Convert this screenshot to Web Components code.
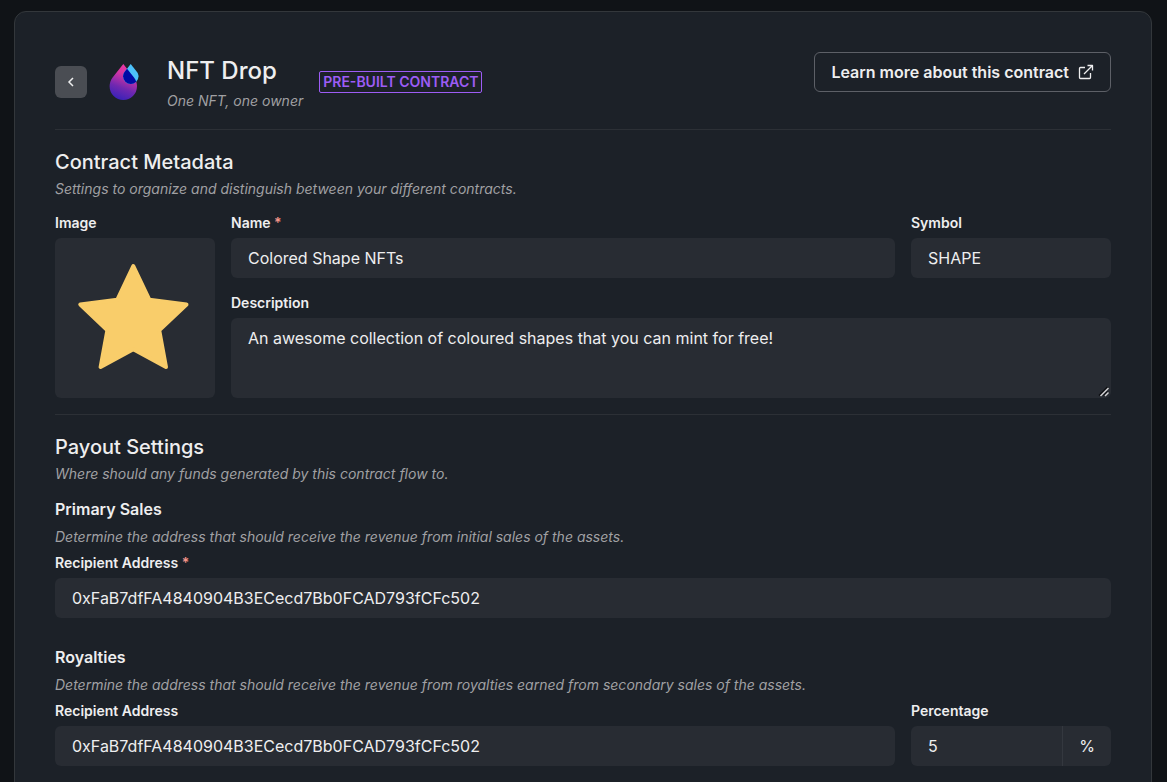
<!DOCTYPE html>
<html lang="en">
<head>
<meta charset="utf-8">
<title>NFT Drop</title>
<style>
  :root {
    --page: #101317;
    --card: #1c2128;
    --field: #282c33;
    --line: #2c3036;
    --edge: #33373b;
    --text: #eeeeef;
    --muted: #a0a0a3;
    --accent: #9d5cf5;
    --required: #f5958a;
  }
  body {
    margin: 0;
    padding: 11px 15px 15px 14px;
    background: var(--page);
    color: var(--text);
    font: 16px/24px Inter, "Liberation Sans", sans-serif;
  }
</style>
</head>
<body>
<contract-card>
  <contract-header heading="NFT Drop" tagline="One NFT, one owner" badge="PRE-BUILT CONTRACT"></contract-header>
  <form-section heading="Contract Metadata" note="Settings to organize and distinguish between your different contracts.">
    <metadata-grid>
      <image-field slot="image" label="Image"></image-field>
      <text-field slot="name" label="Name" value="Colored Shape NFTs" required></text-field>
      <text-field slot="symbol" label="Symbol" value="SHAPE"></text-field>
      <text-field slot="description" label="Description" value="An awesome collection of coloured shapes that you can mint for free!" multiline></text-field>
    </metadata-grid>
  </form-section>
  <form-section heading="Payout Settings" note="Where should any funds generated by this contract flow to.">
    <payout-group heading="Primary Sales" note="Determine the address that should receive the revenue from initial sales of the assets.">
      <text-field label="Recipient Address" value="0xFaB7dfFA4840904B3ECecd7Bb0FCAD793fCFc502" required></text-field>
    </payout-group>
    <payout-group heading="Royalties" note="Determine the address that should receive the revenue from royalties earned from secondary sales of the assets.">
      <text-field label="Recipient Address" value="0xFaB7dfFA4840904B3ECecd7Bb0FCAD793fCFc502"></text-field>
      <text-field slot="side" label="Percentage" value="5" suffix="%"></text-field>
    </payout-group>
  </form-section>
</contract-card>

<script>
  class Base extends HTMLElement {
    connectedCallback() {
      if (this.shadowRoot) return;
      this.attachShadow({ mode: "open" }).innerHTML =
        `<style>*{box-sizing:border-box}h1,h2,h3,p{margin:0}${this.css()}</style>${this.html()}`;
    }
    attr(name) { return this.getAttribute(name) || ""; }
  }

  customElements.define("contract-card", class extends Base {
    css() { return `
      :host { display: block; }
      main { background: var(--card); border: 1px solid var(--edge); border-radius: 12px; padding: 40px; }`; }
    html() { return `<main><slot></slot></main>`; }
  });

  customElements.define("contract-header", class extends Base {
    css() { return `
      :host { display: block; }
      header { display: flex; justify-content: space-between; align-items: flex-start; gap: 16px; padding-bottom: 17px; }
      .lead { display: flex; align-items: center; gap: 16px; }
      .back { width: 32px; height: 32px; padding: 0; border: 0; border-radius: 6px; background: #4a4d53; color: var(--text); display: grid; place-items: center; }
      .drop { width: 48px; height: 48px; }
      h1 { font-size: 24px; line-height: 38px; font-weight: 500; }
      p { font-size: 14px; line-height: 22px; font-style: italic; color: var(--muted); }
      .badge { border: 1px solid var(--accent); border-radius: 2px; padding: 0 3px; font-size: 14px; line-height: 20px; font-weight: 600; color: var(--accent); }
      .more { display: flex; align-items: center; gap: 9px; height: 40px; padding: 0 16px; border: 1px solid #5d6067; border-radius: 6px; color: inherit; font-weight: 600; text-decoration: none; }`; }
    html() { return `
      <header>
        <div class="lead">
          <button class="back" type="button" aria-label="Back">
            <svg width="16" height="16" viewBox="0 0 16 16" fill="none" stroke="currentColor" stroke-width="1.5"><path d="M10 4 6 8l4 4"/></svg>
          </button>
          <svg class="drop" viewBox="0 0 48 48" aria-hidden="true">
            <defs>
              <linearGradient id="body" x1="0.7" y1="0" x2="0.4" y2="1">
                <stop offset="0" stop-color="#f237a3"/><stop offset=".3" stop-color="#d535a4"/><stop offset=".68" stop-color="#7028b0"/><stop offset="1" stop-color="#3a22b8"/>
              </linearGradient>
              <clipPath id="big"><path d="M20.3 6 31 19.5C33 22.2 34 25 34 28.3a13.7 13.7 0 0 1-27.4 0C6.6 25 7.6 22.2 9.6 19.5Z"/></clipPath>
            </defs>
            <path fill="url(#body)" d="M20.3 6 31 19.5C33 22.2 34 25 34 28.3a13.7 13.7 0 0 1-27.4 0C6.6 25 7.6 22.2 9.6 19.5Z"/>
            <path fill="#4cc1fb" d="M27.7 6 34 14C35 15.3 35.5 17 35.5 18.3a7.7 7.7 0 0 1-15.4 0C20.1 17 20.5 15.3 21.5 14Z"/>
            <path fill="#000aa5" clip-path="url(#big)" d="M27.7 6 34 14C35 15.3 35.5 17 35.5 18.3a7.7 7.7 0 0 1-15.4 0C20.1 17 20.5 15.3 21.5 14Z"/>
          </svg>
          <div><h1>${this.attr("heading")}</h1><p>${this.attr("tagline")}</p></div>
          <span class="badge">${this.attr("badge")}</span>
        </div>
        <a class="more" href="#">Learn more about this contract
          <svg width="16" height="16" viewBox="0 0 16 16" fill="none" stroke="currentColor" stroke-width="1.3" stroke-linejoin="round" aria-hidden="true"><path d="M7 3.5H2.5A1 1 0 0 0 1.500 4.5V13.5A1 1 0 0 0 2.500 14.500H11.500A1 1 0 0 0 12.500 13.500V9M9.500 1.500h5v5M14.500 1.500 6 10"/></svg>
        </a>
      </header>`; }
  });

  customElements.define("form-section", class extends Base {
    css() { return `
      :host { display: block; }
      section { border-top: 1px solid var(--line); padding: 16px 0; }
      h2 { font-size: 20px; line-height: 32px; font-weight: 500; font-optical-sizing: none; }
      p { font-size: 14px; line-height: 22px; font-style: italic; color: var(--muted); }
      .content { display: grid; gap: 27px; padding-top: 12px; }`; }
    html() { return `<section><h2>${this.attr("heading")}</h2><p>${this.attr("note")}</p><div class="content"><slot></slot></div></section>`; }
  });

  customElements.define("metadata-grid", class extends Base {
    css() { return `
      :host { display: grid; grid-template-columns: 160px 1fr 200px; gap: 14px 16px; grid-template-areas: "image name symbol" "image desc desc"; }
      slot[name=image]::slotted(*) { grid-area: image; }
      slot[name=name]::slotted(*) { grid-area: name; }
      slot[name=symbol]::slotted(*) { grid-area: symbol; }
      slot[name=description]::slotted(*) { grid-area: desc; }`; }
    html() { return `<slot name="image"></slot><slot name="name"></slot><slot name="symbol"></slot><slot name="description"></slot>`; }
  });

  customElements.define("payout-group", class extends Base {
    css() { return `
      :host { display: grid; gap: 4px; }
      h3 { font-size: 16px; line-height: 25px; font-weight: 600; }
      p { font-size: 14px; line-height: 22px; font-style: italic; color: var(--muted); }
      .row { display: flex; gap: 16px; }
      slot:not([name])::slotted(*) { flex: 1; }
      slot[name=side]::slotted(*) { flex: 0 0 200px; }`; }
    html() { return `<h3>${this.attr("heading")}</h3><p>${this.attr("note")}</p><div class="row"><slot></slot><slot name="side"></slot></div>`; }
  });

  customElements.define("image-field", class extends Base {
    css() { return `
      :host { display: block; }
      .label { display: block; margin-bottom: 4px; font-size: 14px; line-height: 22px; font-weight: 600; }
      button { display: block; width: 160px; height: 160px; padding: 0; border: 0; border-radius: 6px; background: var(--field); }
      svg { display: block; }`; }
    html() { return `
      <label class="label" for="pick">${this.attr("label")}</label>
      <button id="pick" type="button">
        <svg width="160" height="160" viewBox="0 0 160 160" aria-hidden="true">
          <path fill="#f9cd6a" stroke="#f9cd6a" stroke-width="4" stroke-linejoin="round" d="M78.3 28 94.4 61.8 131.5 66.5 104.2 92.2 111 129 78.3 111.2 45.6 129 52.4 92.2 25.3 66.5 62.3 61.8Z"/>
        </svg>
      </button>`; }
  });

  customElements.define("text-field", class extends Base {
    css() { return `
      :host { display: block; min-width: 0; }
      label { display: block; margin-bottom: 4px; font-size: 14px; line-height: 22px; font-weight: 600; }
      label span { color: var(--required); }
      .box { position: relative; display: flex; background: var(--field); border-radius: 6px; }
      input, textarea { display: block; flex: 1; width: 100%; min-width: 0; height: 40px; margin: 0; padding: 0 17px; border: 0; outline: 0; background: none; color: inherit; font: inherit; }
      textarea { height: 80px; padding: 8px 17px; resize: vertical; }
      textarea::-webkit-resizer { background: transparent; }
      .grip { position: absolute; right: 2px; bottom: 1px; pointer-events: none; }
      .suffix { width: 49px; border-left: 1px solid #34383f; line-height: 40px; text-align: center; }`; }
    html() {
      const control = this.hasAttribute("multiline")
        ? `<textarea id="control">${this.attr("value")}</textarea>
           <svg class="grip" width="11" height="11" viewBox="0 0 11 11" fill="none" aria-hidden="true">
             <path stroke="#0c0e11" stroke-width="1.5" d="M1 9.500 9.500 1M5.500 9.500 9.500 5.500"/>
             <path stroke="#d0d0d2" stroke-width="1.5" d="M2.500 10 10.500 2M7 10 10.500 6.500"/>
           </svg>`
        : `<input id="control" type="text" value="${this.attr("value")}">`;
      const star = this.hasAttribute("required") ? ` <span>*</span>` : "";
      const suffix = this.attr("suffix") ? `<div class="suffix">${this.attr("suffix")}</div>` : "";
      return `<label for="control">${this.attr("label")}${star}</label><div class="box">${control}${suffix}</div>`;
    }
  });
</script>
</body>
</html>
